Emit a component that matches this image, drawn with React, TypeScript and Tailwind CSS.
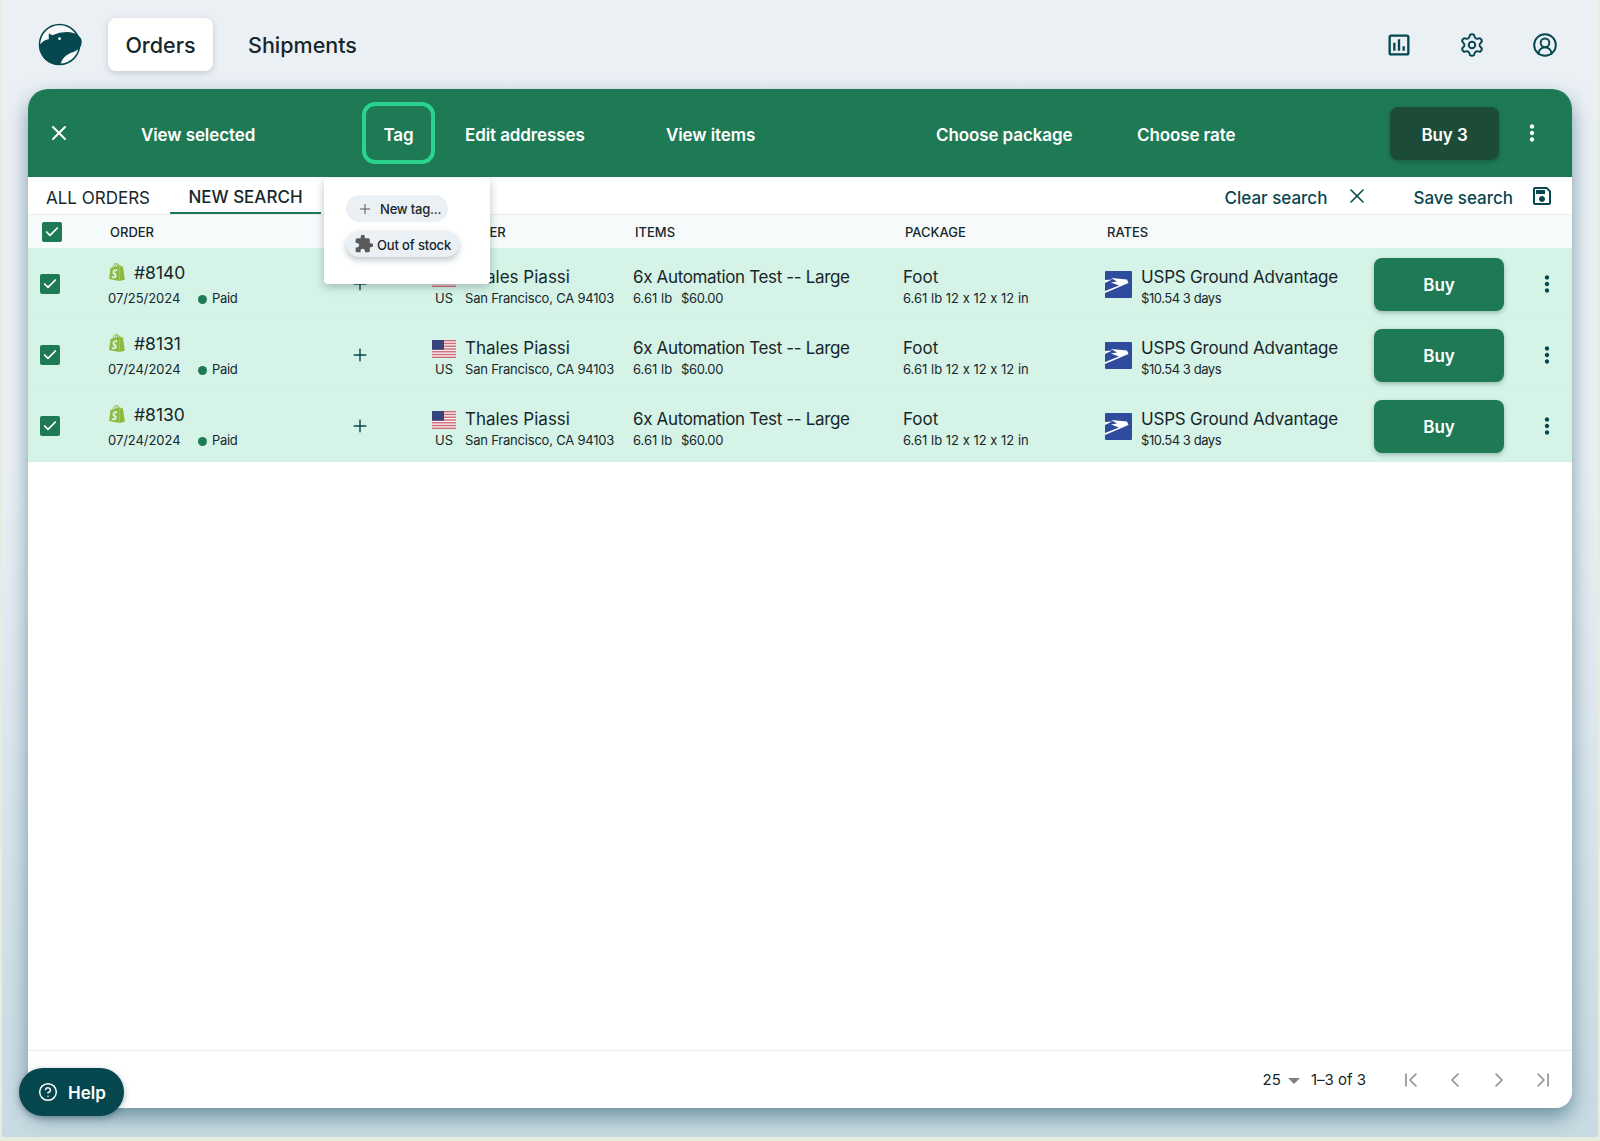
import { Check, ChevronFirst, ChevronLast, ChevronLeft, ChevronRight, CircleHelp, CircleUserRound, Plus, Settings, X } from "lucide-react";
import { MdExtension, MdMoreVert, MdOutlineAssessment, MdOutlineSave } from "react-icons/md";
import { SiShopify } from "react-icons/si";

const orders = [
  { id: "#8140", date: "07/25/2024" },
  { id: "#8131", date: "07/24/2024" },
  { id: "#8130", date: "07/24/2024" },
];

const stripes = [0, 2, 4, 6, 8, 10, 12];

const columns = "grid grid-cols-[80px_234px_90px_201px_270px_202px_269px_130px_68px]";

function Logo() {
  return (
    <svg width="45" height="43" viewBox="18 11 46 44" className="shrink-0">
      <circle cx="40" cy="33" r="20.5" fill="#f7f9fb" stroke="#07474f" strokeWidth="1.6" />
      <path
        d="M29 21.5 L32.5 23.5 Q42 19.5 51 20.5 Q60 22 62.5 28 Q63.5 34 60 37 Q56 40.5 52 42 Q46 47 41 54 Q30 54 24 47 Q19.5 41 20 33 Q24 28 29 27.5 Z"
        fill="#07474f"
      />
      <path d="M41 52.5 Q44 43 57 40 Q54 50 41 52.5 Z" fill="#f7f9fb" />
      <circle cx="40" cy="27" r="1.4" fill="#fff" />
    </svg>
  );
}

function Flag() {
  return (
    <svg width="24" height="18" viewBox="0 0 24 18" className="shrink-0">
      <rect width="24" height="18" fill="#f6eef0" />
      {stripes.map((n) => (
        <rect key={n} y={n * 1.385} width="24" height="1.385" fill="#cf6b74" />
      ))}
      <rect width="12" height="9.7" fill="#37447c" />
    </svg>
  );
}

function Usps() {
  return (
    <svg width="27" height="27" viewBox="0 0 27 27" className="shrink-0">
      <rect width="27" height="27" rx="1" fill="#2f4b9e" />
      <path d="M6 7 L22 8.5 L23.5 12 L0 22 L0 20 L14 14.5 L6 11.5 L12 10.5 Z" fill="#fff" />
      <path d="M0 9 L7 8.5 L0 12 Z" fill="#fff" />
    </svg>
  );
}

function CheckBox() {
  return (
    <span className="flex h-5 w-5 items-center justify-center rounded-[2px] bg-[#1e7a55]">
      <Check size={16} strokeWidth={2.6} className="text-white" />
    </span>
  );
}

function OrderRow({ id, date }: { id: string; date: string }) {
  return (
    <div className={`${columns} h-[71px] bg-[#d6f3e7] text-[#16272b] [box-shadow:inset_0_-1px_0_#d2f0e3] last-of-type:h-[72px]`}>
      <div className="pl-3 pt-[26px]">
        <CheckBox />
      </div>
      <div className="pt-[13px]">
        <div className="flex h-6 items-center">
          <SiShopify size={18} className="-mt-[2px] text-[#8fb93e]" />
          <span className="ml-2 text-[17.5px]">{id}</span>
        </div>
        <div className="mt-[6px] flex h-4 items-center text-[13px] tracking-[-0.05px]">
          <span className="w-[90px]">{date}</span>
          <span className="h-[9px] w-[9px] rounded-full bg-[#1e7a55]" />
          <span className="ml-[5px] tracking-[-0.3px]">Paid</span>
        </div>
      </div>
      <div className="pl-2 pt-[26px]">
        <Plus size={20} strokeWidth={1.7} className="text-[#07474f]" />
      </div>
      <div className="pt-[18px]">
        <div className="flex h-6 items-center">
          <Flag />
          <span className="ml-[9px] text-[17px]">Thales Piassi</span>
        </div>
        <div className="mt-px flex h-4 items-center text-[13px]">
          <span className="w-[33px] pl-[3px]">US</span>
          <span className="w-[150px] overflow-hidden whitespace-nowrap tracking-[-0.2px]">San Francisco, CA 94103</span>
        </div>
      </div>
      <div className="pt-[18px]">
        <div className="flex h-6 items-center whitespace-nowrap text-[17px] tracking-[-0.35px]">6x Automation Test -- Large</div>
        <div className="mt-px flex h-4 items-center text-[13px]">
          <span className="w-[48px]">6.61 lb</span>
          <span className="tracking-[-0.35px]">$60.00</span>
        </div>
      </div>
      <div className="pt-[18px]">
        <div className="flex h-6 items-center text-[17px]">Foot</div>
        <div className="mt-px flex h-4 items-center text-[13px]">6.61 lb 12 x 12 x 12 in</div>
      </div>
      <div className="flex pt-[23px]">
        <Usps />
        <div className="ml-[9px] -mt-[5px]">
          <div className="flex h-6 items-center whitespace-nowrap text-[17px] tracking-[-0.2px]">USPS Ground Advantage</div>
          <div className="mt-px flex h-4 items-center text-[13px] tracking-[-0.45px]">$10.54 3 days</div>
        </div>
      </div>
      <div className="pt-[10px]">
        <button className="flex h-[53px] w-[130px] items-center justify-center rounded-lg bg-[#1e7a55] pt-[3px] text-[17px] font-semibold text-white shadow-[0_2px_5px_rgba(0,60,50,0.3)]">
          Buy
        </button>
      </div>
      <div className="flex items-center pl-[30px]">
        <MdMoreVert size={26} className="text-[#07474f]" />
      </div>
    </div>
  );
}

export default function App() {
  return (
    <div className="h-[1141px] w-[1600px] overflow-hidden bg-[#e6ecdf] pb-1 pl-[2px] pr-[2px] font-['Inter',sans-serif] [font-feature-settings:'calt'_0]">
      <div className="relative h-full bg-gradient-to-b from-[#ebf0f5] from-40% to-[#c8dae2] pt-[18px]">
        <nav className="flex h-[53px] items-center pl-[36px] pr-[39px] text-[#16272b]">
          <Logo />
          <button className="ml-[25px] flex h-[53px] w-[105px] items-center justify-center rounded-lg bg-white pt-[2px] text-[21.5px] font-medium shadow-[0_2px_6px_rgba(60,90,110,0.25)]">
            Orders
          </button>
          <span className="ml-[35px] pt-[2px] text-[21.5px] font-medium">Shipments</span>
          <div className="ml-auto flex items-center gap-[45px] text-[#07474f]">
            <MdOutlineAssessment size={28} />
            <Settings size={26} strokeWidth={1.8} className="mx-px" />
            <CircleUserRound size={26} strokeWidth={1.8} className="mx-px" />
          </div>
        </nav>

        <main className="relative ml-[26px] mt-[18px] flex h-[1019px] w-[1544px] flex-col rounded-t-[20px] rounded-b-[16px] bg-white shadow-[0_9px_20px_rgba(30,85,105,0.55)]">
          <div className="flex h-[88px] shrink-0 items-center rounded-t-[20px] bg-[#1e7a55] text-[17px] font-semibold tracking-[-0.1px] text-white">
            <div className="w-[113px] pl-[19px]">
              <X size={24} strokeWidth={2} />
            </div>
            <span className="w-[221px] pt-[5px]">View selected</span>
            <span className="flex h-[62px] w-[73px] items-center justify-center rounded-[13px] border-4 border-[#2ad28e] pt-[5px]">Tag</span>
            <span className="ml-[30px] w-[201px] pt-[5px]">Edit addresses</span>
            <span className="w-[270px] pt-[5px]">View items</span>
            <span className="w-[201px] pt-[5px]">Choose package</span>
            <span className="w-[253px] pt-[5px]">Choose rate</span>
            <button className="flex h-[53px] w-[109px] items-center justify-center rounded-lg bg-[#1c4b38] pt-[5px] shadow-[0_2px_5px_rgba(0,40,30,0.3)]">
              Buy 3
            </button>
            <MdMoreVert size={26} className="ml-[20px]" />
          </div>

          <div className="flex h-[38px] shrink-0 items-center border-b border-[#e6eef1] text-[17px]">
            <span className="w-[142px] pl-[18px] pt-[6px] text-[#16272b]">ALL ORDERS</span>
            <span className="flex h-full w-[151px] items-center justify-center border-b-2 border-[#1e7a55] pt-[6px] font-medium text-[#16272b]">NEW SEARCH</span>
            <div className="ml-auto flex items-center pr-[18px] font-medium text-[#07474f]">
              <span className="pt-[6px]">Clear search</span>
              <X size={24} strokeWidth={1.6} className="ml-[18px]" />
              <span className="ml-[44px] pt-[6px]">Save search</span>
              <MdOutlineSave size={24} className="ml-[17px]" />
            </div>
          </div>

          <div className={`${columns} h-[33px] shrink-0 items-center bg-[#f6fafb] text-[13px] font-medium text-[#16272b]`}>
            <div className="pl-[14px]">
              <CheckBox />
            </div>
            <span className="pl-[2px] pt-[2px]">ORDER</span>
            <span />
            <span className="pt-[2px]">CUSTOMER</span>
            <span className="pl-[2px] pt-[2px]">ITEMS</span>
            <span className="pl-[2px] pt-[2px]">PACKAGE</span>
            <span className="pl-[2px] pt-[2px]">RATES</span>
            <span />
            <span />
          </div>

          <section>
            {orders.map((o) => (
              <OrderRow key={o.id} id={o.id} date={o.date} />
            ))}
          </section>

          <div className="flex-1" />

          <footer className="flex h-[58px] shrink-0 items-center border-t border-[#e4eef3] pr-[17px] text-[15px] text-[#16272b]">
            <div className="ml-auto flex items-center pt-[2px]">
              <span>25</span>
              <span className="ml-[7px] h-0 w-0 border-x-[6px] border-t-[6px] border-x-transparent border-t-[#808080]" />
              <span className="ml-[11px]">1–3 of 3</span>
            </div>
            <div className="ml-[33px] flex items-center gap-[20px] text-[#8a8f93]">
              <ChevronFirst size={24} strokeWidth={1.6} />
              <ChevronLeft size={24} strokeWidth={1.6} />
              <ChevronRight size={24} strokeWidth={1.6} />
              <ChevronLast size={24} strokeWidth={1.6} />
            </div>
          </footer>

          <div className="absolute left-[296px] top-[89px] h-[106px] w-[166px] rounded-[4px] bg-white pl-[22px] pt-[17px] shadow-[0_3px_10px_rgba(30,60,70,0.3)]">
            <div className="flex h-[27px] w-[102px] items-center rounded-full bg-[#ebf0f5] pl-[11px] text-[13px] font-medium tracking-[-0.2px] text-[#16272b]">
              <Plus size={16} strokeWidth={1.5} className="text-[#555]" />
              <span className="ml-[7px] pt-[2px]">New tag...</span>
            </div>
            <div className="mt-[9px] flex h-[26px] w-[113px] items-center rounded-full bg-[#ebf0f5] pl-[8px] text-[13px] font-medium tracking-[-0.15px] text-[#16272b] shadow-[0_3px_6px_rgba(40,70,90,0.3)]">
              <MdExtension size={20} className="text-[#5a5a5a]" />
              <span className="ml-[3px] whitespace-nowrap pt-[3px]">Out of stock</span>
            </div>
          </div>
        </main>

        <button className="absolute left-[17px] top-[1068px] flex h-[48px] w-[105px] items-center rounded-full bg-[#06464f] pl-[19px] text-[17px] font-semibold text-white shadow-[0_2px_6px_rgba(0,40,50,0.35)]">
          <CircleHelp size={20} strokeWidth={1.8} />
          <span className="ml-[10px] pt-1">Help</span>
        </button>
      </div>
    </div>
  );
}
